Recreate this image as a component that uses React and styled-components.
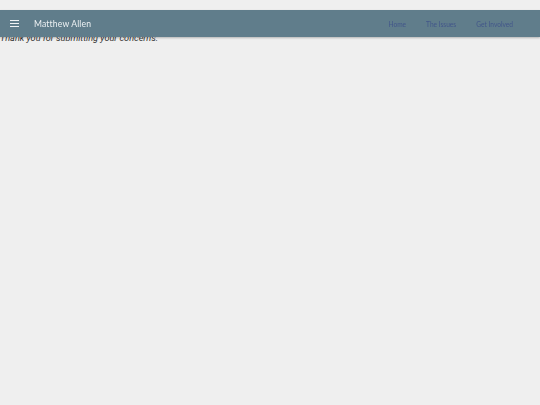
import React from "react";
import styled, { createGlobalStyle } from "styled-components";

const Global = createGlobalStyle`
  html, body { margin: 0; padding: 0; background: #efefef; }
  body { font-family: Roboto, "Liberation Sans", sans-serif; }
`;

const Page = styled.div`
  min-height: 405px;
  background: #efefef;
  padding-top: 10px;
`;

const AppBar = styled.header`
  position: fixed;
  top: 10px;
  left: 0;
  right: 0;
  height: 27px;
  background: #607d8b;
  display: flex;
  align-items: center;
  padding: 0 27px 0 10px;
  box-shadow: 0 1px 2px rgba(0,0,0,0.25);
  z-index: 2;
`;

const MenuButton = styled.button`
  border: 0;
  background: none;
  padding: 0;
  width: 10px;
  height: 8px;
  display: flex;
  flex-direction: column;
  justify-content: space-between;
  cursor: pointer;
  margin-right: 14px;
`;

const Line = styled.span`
  display: block;
  height: 1.3px;
  width: 9px;
  background: #f0f3f5;
`;

const Title = styled.div`
  font-family: Lato, "Open Sans", sans-serif;
  font-size: 8.6px;
  letter-spacing: 0.15px;
  color: #eef2f4;
`;

const Spacer = styled.div`
  flex: 1;
`;

const Nav = styled.nav`
  display: flex;
  gap: 20px;
`;

const NavLink = styled.a`
  font-family: Lato, "Open Sans", sans-serif;
  font-size: 6.6px;
  color: #42568a;
  text-decoration: none;
`;

const Message = styled.p`
  margin: 23px 0 0 0;
  font-style: italic;
  font-size: 9.1px;
  color: #333;
`;

export default function App() {
  return (
    <Page>
      <Global />
      <AppBar>
        <MenuButton aria-label="menu">
          <Line />
          <Line />
          <Line />
        </MenuButton>
        <Title>Matthew Allen</Title>
        <Spacer />
        <Nav>
          <NavLink href="#">Home</NavLink>
          <NavLink href="#">The Issues</NavLink>
          <NavLink href="#">Get Involved</NavLink>
        </Nav>
      </AppBar>
      <Message>Thank you for submitting your concerns.</Message>
    </Page>
  );
}
